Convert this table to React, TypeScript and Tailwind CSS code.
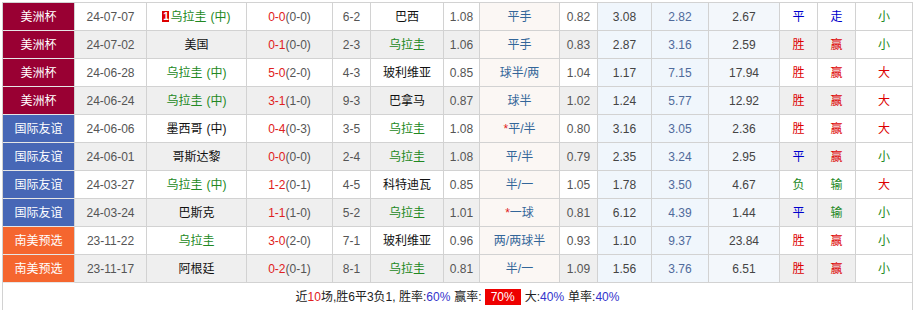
import React from 'react';

type Row = {
  league: 'mz' | 'gj' | 'nm';
  date: string;
  home: string;
  homeNeutral?: boolean;
  homeWin?: boolean;
  badge?: string;
  score: string;
  half: string;
  corner: string;
  away: string;
  awayU?: boolean;
  o1: string;
  hc: string;
  star?: boolean;
  o2: string;
  e1: string;
  e2: string;
  e3: string;
  res: string;
  pan: string;
  ou: string;
};

const leagueNames: Record<Row['league'], string> = {
  mz: '美洲杯',
  gj: '国际友谊',
  nm: '南美预选',
};

const leagueBg: Record<Row['league'], string> = {
  mz: 'bg-[#990033]',
  gj: 'bg-[#4767b6]',
  nm: 'bg-[#f5662f]',
};

const resultColor: Record<string, string> = {
  胜: 'text-[#dd0000]',
  赢: 'text-[#dd0000]',
  大: 'text-[#dd0000]',
  平: 'text-[#0000cc]',
  走: 'text-[#0000cc]',
  负: 'text-[#228822]',
  输: 'text-[#228822]',
  小: 'text-[#228822]',
};

const rows: Row[] = [
  { league: 'mz', date: '24-07-07', home: '乌拉圭', homeNeutral: true, homeWin: true, badge: '1', score: '0-0', half: '(0-0)', corner: '6-2', away: '巴西', o1: '1.08', hc: '平手', o2: '0.82', e1: '3.08', e2: '2.82', e3: '2.67', res: '平', pan: '走', ou: '小' },
  { league: 'mz', date: '24-07-02', home: '美国', score: '0-1', half: '(0-0)', corner: '2-3', away: '乌拉圭', awayU: true, o1: '1.06', hc: '平手', o2: '0.83', e1: '2.87', e2: '3.16', e3: '2.59', res: '胜', pan: '赢', ou: '小' },
  { league: 'mz', date: '24-06-28', home: '乌拉圭', homeNeutral: true, homeWin: true, score: '5-0', half: '(2-0)', corner: '4-3', away: '玻利维亚', o1: '0.85', hc: '球半/两', o2: '1.04', e1: '1.17', e2: '7.15', e3: '17.94', res: '胜', pan: '赢', ou: '大' },
  { league: 'mz', date: '24-06-24', home: '乌拉圭', homeNeutral: true, homeWin: true, score: '3-1', half: '(1-0)', corner: '9-3', away: '巴拿马', o1: '0.87', hc: '球半', o2: '1.02', e1: '1.24', e2: '5.77', e3: '12.92', res: '胜', pan: '赢', ou: '大' },
  { league: 'gj', date: '24-06-06', home: '墨西哥', homeNeutral: true, score: '0-4', half: '(0-3)', corner: '3-5', away: '乌拉圭', awayU: true, o1: '1.08', hc: '平/半', star: true, o2: '0.80', e1: '3.16', e2: '3.05', e3: '2.36', res: '胜', pan: '赢', ou: '大' },
  { league: 'gj', date: '24-06-01', home: '哥斯达黎', score: '0-0', half: '(0-0)', corner: '2-4', away: '乌拉圭', awayU: true, o1: '1.08', hc: '平/半', o2: '0.79', e1: '2.35', e2: '3.24', e3: '2.95', res: '平', pan: '赢', ou: '小' },
  { league: 'gj', date: '24-03-27', home: '乌拉圭', homeNeutral: true, homeWin: true, score: '1-2', half: '(0-1)', corner: '4-5', away: '科特迪瓦', o1: '0.85', hc: '半/一', o2: '1.05', e1: '1.78', e2: '3.50', e3: '4.67', res: '负', pan: '输', ou: '大' },
  { league: 'gj', date: '24-03-24', home: '巴斯克', score: '1-1', half: '(1-0)', corner: '5-2', away: '乌拉圭', awayU: true, o1: '1.01', hc: '一球', star: true, o2: '0.81', e1: '6.12', e2: '4.39', e3: '1.44', res: '平', pan: '输', ou: '小' },
  { league: 'nm', date: '23-11-22', home: '乌拉圭', homeWin: true, score: '3-0', half: '(2-0)', corner: '7-1', away: '玻利维亚', o1: '0.96', hc: '两/两球半', o2: '0.93', e1: '1.10', e2: '9.37', e3: '23.84', res: '胜', pan: '赢', ou: '小' },
  { league: 'nm', date: '23-11-17', home: '阿根廷', score: '0-2', half: '(0-1)', corner: '8-1', away: '乌拉圭', awayU: true, o1: '0.81', hc: '半/一', o2: '1.09', e1: '1.56', e2: '3.76', e3: '6.51', res: '胜', pan: '赢', ou: '小' },
];

const cell = 'flex items-center justify-center border-r border-b border-[#d2d2d2] whitespace-nowrap';

export default function App() {
  return (
    <div className="w-[917px] h-[310px] overflow-hidden bg-white pl-[2px] pt-[2px] font-['Liberation_Sans','Noto_Sans_CJK_SC',sans-serif] text-[12px]">
      <div className="w-[911px] border-l border-t border-[#d2d2d2]">
        <div className="grid grid-cols-[72px_72px_100px_86px_38px_73px_36px_80px_38px_54px_57px_71px_38px_38px_57px] auto-rows-[28px]">
          {rows.map((r, i) => {
            const alt = i % 2 === 1 ? 'bg-[#efefef]' : 'bg-white';
            return (
              <React.Fragment key={r.date}>
                <div className={`${cell} ${leagueBg[r.league]} text-white border-b-[#e6e6e6]`}>
                  {leagueNames[r.league]}
                </div>
                <div className={`${cell} ${alt} text-[#555]`}>{r.date}</div>
                <div className={`${cell} ${alt} ${r.homeWin ? 'text-[#228822]' : 'text-[#111]'}`}>
                  {r.badge && (
                    <span className="mr-px inline-flex h-[11px] w-[7px] items-center justify-center bg-[#dd0000] text-[10px] font-bold leading-none text-white">
                      {r.badge}
                    </span>
                  )}
                  {r.home}
                  {r.homeNeutral && <span className="ml-[4px]">(中)</span>}
                </div>
                <div className={`${cell} ${alt}`}>
                  <span className="text-[#e02020]">{r.score}</span>
                  <span className="text-[#555]">{r.half}</span>
                </div>
                <div className={`${cell} ${alt} text-[#555]`}>{r.corner}</div>
                <div className={`${cell} ${alt} ${r.awayU ? 'text-[#228822]' : 'text-[#111]'}`}>{r.away}</div>
                <div className={`${cell} ${alt} text-[#555]`}>{r.o1}</div>
                <div className={`${cell} bg-[#fbf7f4] text-[#336699]`}>
                  {r.star && <span className="text-[#e02020]">*</span>}
                  {r.hc}
                </div>
                <div className={`${cell} ${alt} text-[#555]`}>{r.o2}</div>
                <div className={`${cell} bg-[#f0f6fc] text-[#444]`}>{r.e1}</div>
                <div className={`${cell} bg-[#f0f6fc] text-[#4f6a9b]`}>{r.e2}</div>
                <div className={`${cell} bg-[#f3f7fb] text-[#444]`}>{r.e3}</div>
                <div className={`${cell} ${alt} ${resultColor[r.res]}`}>{r.res}</div>
                <div className={`${cell} ${alt} ${resultColor[r.pan]}`}>{r.pan}</div>
                <div className={`${cell} bg-white ${resultColor[r.ou]}`}>{r.ou}</div>
              </React.Fragment>
            );
          })}
        </div>
        <div className="flex h-[28px] items-center justify-center border-r border-b border-[#d2d2d2] text-[#222]">
          <span>近</span>
          <span className="text-[#e02020]">10</span>
          <span>场,胜6平3负1, 胜率:</span>
          <span className="text-[#3333cc]">60%</span>
          <span className="ml-[4px]">赢率:</span>
          <span className="ml-[3px] bg-[#ee0000] px-[6px] leading-[16px] text-white">70%</span>
          <span className="ml-[4px]">大:</span>
          <span className="text-[#3333cc]">40%</span>
          <span className="ml-[4px]">单率:</span>
          <span className="text-[#3333cc]">40%</span>
        </div>
      </div>
    </div>
  );
}
